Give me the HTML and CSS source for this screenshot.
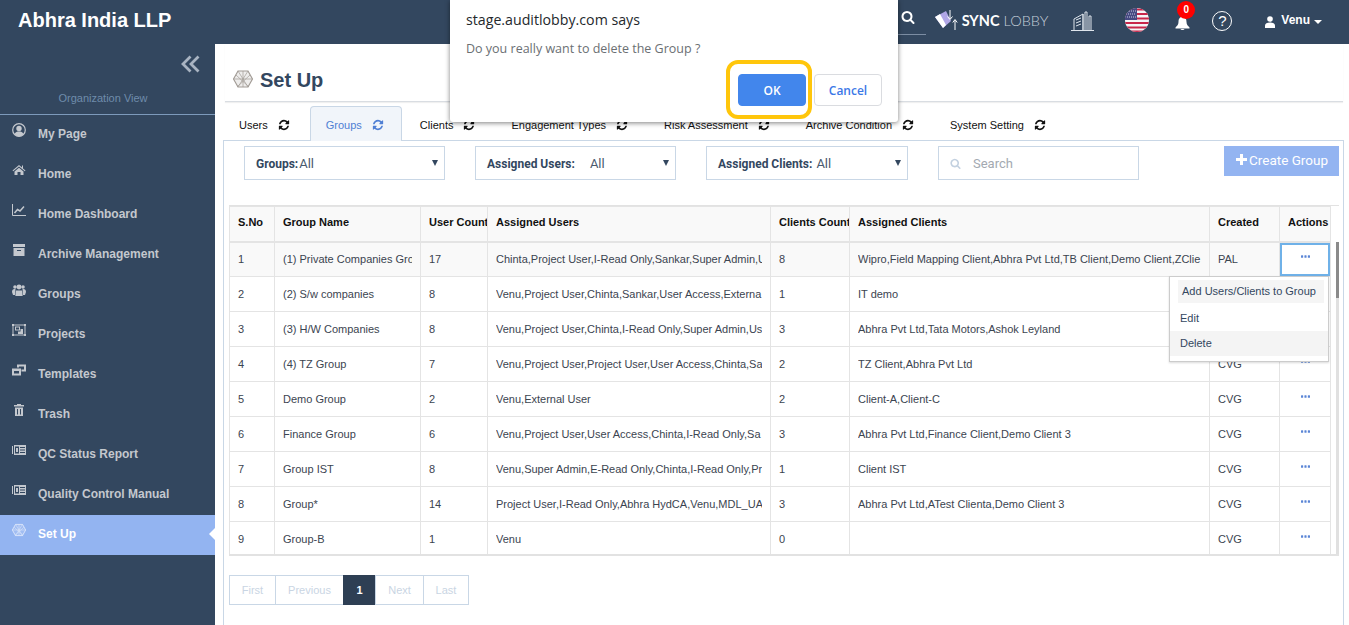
FILE: index.html
```html
<!DOCTYPE html>
<html>
  <head>
    <meta charset="utf-8">
    <title>Set Up</title>
    <link rel="stylesheet" href="styles.css">
  </head>
  <body>
    <svg class="defs" width="0" height="0">
      <symbol id="i-refresh" viewBox="0 0 1792 1792">
        <path d="M1639 1056q0 5-1 7-64 268-268 434.5t-478 166.5q-146 0-282.5-55t-243.5-157l-129 129q-19 19-45 19t-45-19-19-45v-448q0-26 19-45t45-19h448q26 0 45 19t19 45-19 45l-137 137q71 66 161 102t187 36q134 0 250-65t186-179q11-17 53-117 8-23 30-23h192q13 0 22.5 9.5t9.5 22.5zm25-800v448q0 26-19 45t-45 19h-448q-26 0-45-19t-19-45 19-45l138-138q-148-137-349-137-134 0-250 65t-186 179q-11 17-53 117-8 23-30 23h-199q-13 0-22.5-9.5t-9.5-22.5v-7q65-268 270-434.5t480-166.5q146 0 284 55.5t245 156.5l130-129q19-19 45-19t45 19 19 45z"/>
      </symbol>
      <symbol id="i-search" viewBox="0 0 1792 1792">
        <path d="M1216 832q0-185-131.5-316.5t-316.5-131.5-316.5 131.5-131.5 316.5 131.5 316.5 316.5 131.5 316.5-131.5 131.5-316.5zm512 832q0 52-38 90t-90 38q-54 0-90-38l-343-342q-179 124-399 124-143 0-273.5-55.5t-225-150-150-225-55.5-273.5 55.5-273.5 150-225 225-150 273.5-55.5 273.5 55.5 225 150 150 225 55.5 273.5q0 220-124 399l343 343q37 37 37 90z"/>
      </symbol>
      <symbol id="i-dots" viewBox="0 0 10 3">
        <rect x="0" y="0" width="2.4" height="3" rx=".6"/>
        <rect x="3.8" y="0" width="2.4" height="3" rx=".6"/>
        <rect x="7.6" y="0" width="2.4" height="3" rx=".6"/>
      </symbol>
      <symbol id="i-news" viewBox="0 0 14 10">
        <path fill-rule="evenodd" d="M0 1h1v8H0zM2 0h12v10H2zM3 1.500v7h4v-7zM8 2v1h5V2zM8 4.500v1h5v-1zM8 7v1h5V7z"/>
        <rect x="4" y="3" width="2" height="4"/>
      </symbol>
      <symbol id="i-hex" viewBox="0 0 20 18">
        <path d="M5 1h10l4.500 8-4.500 8H5L.5 9z" fill="currentColor" fill-opacity=".18" stroke="currentColor" stroke-width="1.200"/>
        <path d="M5 1l10 16M15 1L5 17M.5 9h19M10 1v16M3 5l13 12M17 5L4 17" fill="none" stroke="currentColor" stroke-width=".7"/>
      </symbol>
    </svg>

    <div class="topbar">
      <div class="brand">Abhra India LLP</div>
      <div class="topbar-right">
        <div class="top-search"><svg class="ic-14"><use href="#i-search"/></svg></div>
        <svg class="sync-logo" width="24" height="22" viewBox="0 0 24 22">
          <path d="M1 8l11-6 5 10-8 7z" fill="#b0a6e6"/>
          <path d="M1 8l5-3 6 11-3 3z" fill="#fff"/>
          <path d="M16 1v9M13.500 7.500l2.500 3 2.500-3M21 21v-10M18.800 13.500l2.200-3 2.200 3" stroke="#fff" stroke-width="1" fill="none"/>
        </svg>
        <div class="sync-text"><b>SYNC</b> LOBBY</div>
        <svg class="building" width="23" height="20" viewBox="0 0 23 20">
          <path d="M3 19V8l9-5v16M12 3l0 16M14 19V1h2v18M18 19V5h2v14M0 19.500h23M5 9l5-2M5 12l5-2M5 15l5-2" stroke="#dfe5ec" stroke-width="1" fill="none"/>
        </svg>
        <svg class="flag" width="24" height="24" viewBox="0 0 24 24">
          <defs><clipPath id="flag-clip"><circle cx="12" cy="12" r="12"/></clipPath></defs>
          <g clip-path="url(#flag-clip)">
            <rect width="24" height="24" fill="#f4f4f6"/>
            <path d="M0 1.500h24M0 6h24M0 10.500h24M0 15h24M0 19.500h24M0 23.500h24" stroke="#c8264a" stroke-width="2.200"/>
            <rect width="12" height="12" fill="#464a82"/>
            <path d="M2 3h9M1 6h10M2 9h9" stroke="#c9cbe0" stroke-width="1" stroke-dasharray="1 1"/>
          </g>
        </svg>
        <div class="bell">
          <svg width="15" height="13" viewBox="0 0 15 13">
            <path d="M7.500 0C4.500 0 3.500 2 3.500 5c0 2.500-1.500 4-3 5.500v1h14v-1c-1.500-1.500-3-3-3-5.500 0-3-1-5-4-5zM5.500 12h4a2 1 0 0 1-4 0z" fill="#fff"/>
          </svg>
          <span class="badge">0</span>
        </div>
        <div class="help">?</div>
        <svg class="user-ic" width="10" height="12" viewBox="0 0 10 12">
          <circle cx="5" cy="3" r="2.800" fill="#fff"/>
          <path d="M0 12V9.500C0 7.500 2 6.500 5 6.500s5 1 5 3V12z" fill="#fff"/>
        </svg>
        <div class="user-name">Venu</div>
        <span class="caret"></span>
      </div>
    </div>

    <div class="layout">
      <div class="sidebar">
        <div class="collapse">
          <svg width="19" height="18" viewBox="0 0 19 18">
            <path d="M9.500 1.500L2 9l7.500 7.500M17.500 1.500L10 9l7.500 7.500" fill="none" stroke="#a9b4c2" stroke-width="2.800"/>
          </svg>
        </div>
        <div class="org-view">Organization View</div>
        <div class="nav">
          <div class="nav-item">
            <svg class="nav-ic" viewBox="0 0 14 14"><circle cx="7" cy="7" r="6.300" fill="none" stroke="currentColor" stroke-width="1.200"/><circle cx="7" cy="5.500" r="2.700"/><path d="M2.500 11c1-2 2.500-2.500 4.500-2.500s3.500.5 4.500 2.500c-1 1.500-2.700 2.500-4.500 2.500S3.500 12.500 2.500 11z"/></svg>
            <span>My Page</span>
          </div>
          <div class="nav-item">
            <svg class="nav-ic" viewBox="0 0 14 14"><path d="M7 2L0.500 7.500l.7.800L7 3.500l5.800 4.800.7-.8-2.500-2.100V2.500H10v2z"/><path d="M2.500 8.500L7 4.800l4.500 3.700V12H8.500V9h-3v3h-3z"/></svg>
            <span>Home</span>
          </div>
          <div class="nav-item">
            <svg class="nav-ic" viewBox="0 0 14 14"><path d="M.5 1v11.500H14" fill="none" stroke="currentColor" stroke-width="1"/><path d="M2.500 10l3-3.500 2.500 1.500 4-4.500" fill="none" stroke="currentColor" stroke-width="1.500"/></svg>
            <span>Home Dashboard</span>
          </div>
          <div class="nav-item">
            <svg class="nav-ic" viewBox="0 0 14 14"><rect x="1" y="1" width="12" height="3"/><path fill-rule="evenodd" d="M1.500 5h11v8h-11zM5 7v1h4V7z"/></svg>
            <span>Archive Management</span>
          </div>
          <div class="nav-item">
            <svg class="nav-ic" viewBox="0 0 14 14"><circle cx="3" cy="4" r="1.800"/><circle cx="11" cy="4" r="1.800"/><circle cx="7" cy="4" r="2.400"/><path d="M0 9c0-2 1-3 2.500-3h1L3 12H1zM14 9c0-2-1-3-2.500-3h-1l.5 6h2zM4 7.500h6l.7 5.500H3.300z"/></svg>
            <span>Groups</span>
          </div>
          <div class="nav-item">
            <svg class="nav-ic" viewBox="0 0 14 14"><path fill-rule="evenodd" d="M0 1h2v.5h10V1h2v2h-.5v8h.5v2h-2v-.5H2v.5H0v-2h.5V3H0zM1.500 3v8H2v.5h10V11h.5V3H12v-.5H2V3z"/><path fill-rule="evenodd" d="M3 3.500h5v4H3zM4 4.500v2h3v-2zM6 8.500h2.500V6H11v5H6z"/></svg>
            <span>Projects</span>
          </div>
          <div class="nav-item">
            <svg class="nav-ic" viewBox="0 0 14 14"><path fill-rule="evenodd" d="M5 1.500h9v7H9.500v-2h2.500v-3H7v1H5z"/><path fill-rule="evenodd" d="M0 5.500h9v7H0zM2 8v2.500h5V8z"/></svg>
            <span>Templates</span>
          </div>
          <div class="nav-item">
            <svg class="nav-ic" viewBox="0 0 14 14"><path d="M5 1h4v1h3v1.500H2V2h3zM3 4.500h8V13H3zM5 6v5.500h1V6zM8 6v5.500h1V6z" fill-rule="evenodd"/></svg>
            <span>Trash</span>
          </div>
          <div class="nav-item">
            <svg class="nav-ic"><use href="#i-news"/></svg>
            <span>QC Status Report</span>
          </div>
          <div class="nav-item">
            <svg class="nav-ic"><use href="#i-news"/></svg>
            <span>Quality Control Manual</span>
          </div>
          <div class="nav-item active">
            <svg class="nav-ic"><use href="#i-hex"/></svg>
            <span>Set Up</span>
          </div>
        </div>
      </div>

      <div class="main">
        <div class="page-title">
          <svg class="title-ic" width="20" height="18"><use href="#i-hex"/></svg>
          <span>Set Up</span>
        </div>

        <div class="tabs">
          <div class="tab">Users<svg class="ic-refresh"><use href="#i-refresh"/></svg></div>
          <div class="tab active">Groups<svg class="ic-refresh"><use href="#i-refresh"/></svg></div>
          <div class="tab">Clients<svg class="ic-refresh"><use href="#i-refresh"/></svg></div>
          <div class="tab">Engagement Types<svg class="ic-refresh"><use href="#i-refresh"/></svg></div>
          <div class="tab">Risk Assessment<svg class="ic-refresh"><use href="#i-refresh"/></svg></div>
          <div class="tab">Archive Condition<svg class="ic-refresh"><use href="#i-refresh"/></svg></div>
          <div class="tab">System Setting<svg class="ic-refresh"><use href="#i-refresh"/></svg></div>
        </div>

        <div class="card">
          <div class="filters">
            <div class="select sel-groups"><b>Groups:</b><span class="sel-val tight">All</span><i class="sel-caret"></i></div>
            <div class="select sel-users"><b>Assigned Users:</b><span class="sel-val">All</span><i class="sel-caret"></i></div>
            <div class="select sel-clients"><b>Assigned Clients:</b><span class="sel-val small-gap">All</span><i class="sel-caret"></i></div>
            <div class="search-box"><svg class="ic-search"><use href="#i-search"/></svg>Search</div>
            <div class="create-btn"><span class="plus"></span>Create Group</div>
          </div>

          <div class="table-wrap">
            <table class="grid">
              <colgroup>
                <col class="c-no"><col class="c-name"><col class="c-ucount"><col class="c-users"><col class="c-ccount"><col class="c-clients"><col class="c-created"><col class="c-actions">
              </colgroup>
              <thead>
                <tr><th>S.No</th><th>Group Name</th><th>User Count</th><th>Assigned Users</th><th>Clients Count</th><th>Assigned Clients</th><th>Created</th><th>Actions</th></tr>
              </thead>
              <tbody>
                <tr class="row-hover">
                  <td>1</td><td><div class="clip">(1) Private Companies Gro</div></td><td>17</td>
                  <td><div class="clip">Chinta,Project User,I-Read Only,Sankar,Super Admin,U</div></td><td>8</td>
                  <td><div class="clip">Wipro,Field Mapping Client,Abhra Pvt Ltd,TB Client,Demo Client,ZClie</div></td><td>PAL</td>
                  <td class="act focused"><svg class="dots"><use href="#i-dots"/></svg></td>
                </tr>
                <tr>
                  <td>2</td><td><div class="clip">(2) S/w companies</div></td><td>8</td>
                  <td><div class="clip">Venu,Project User,Chinta,Sankar,User Access,Externa</div></td><td>1</td>
                  <td><div class="clip">IT demo</div></td><td>CVG</td>
                  <td class="act"><svg class="dots"><use href="#i-dots"/></svg></td>
                </tr>
                <tr>
                  <td>3</td><td><div class="clip">(3) H/W Companies</div></td><td>8</td>
                  <td><div class="clip">Venu,Project User,Chinta,I-Read Only,Super Admin,Us</div></td><td>3</td>
                  <td><div class="clip">Abhra Pvt Ltd,Tata Motors,Ashok Leyland</div></td><td>CVG</td>
                  <td class="act"><svg class="dots"><use href="#i-dots"/></svg></td>
                </tr>
                <tr>
                  <td>4</td><td><div class="clip">(4) TZ Group</div></td><td>7</td>
                  <td><div class="clip">Venu,Project User,Project User,User Access,Chinta,Sa</div></td><td>2</td>
                  <td><div class="clip">TZ Client,Abhra Pvt Ltd</div></td><td>CVG</td>
                  <td class="act"><svg class="dots"><use href="#i-dots"/></svg></td>
                </tr>
                <tr>
                  <td>5</td><td><div class="clip">Demo Group</div></td><td>2</td>
                  <td><div class="clip">Venu,External User</div></td><td>2</td>
                  <td><div class="clip">Client-A,Client-C</div></td><td>CVG</td>
                  <td class="act"><svg class="dots"><use href="#i-dots"/></svg></td>
                </tr>
                <tr>
                  <td>6</td><td><div class="clip">Finance Group</div></td><td>6</td>
                  <td><div class="clip">Venu,Project User,User Access,Chinta,I-Read Only,Sa</div></td><td>3</td>
                  <td><div class="clip">Abhra Pvt Ltd,Finance Client,Demo Client 3</div></td><td>CVG</td>
                  <td class="act"><svg class="dots"><use href="#i-dots"/></svg></td>
                </tr>
                <tr>
                  <td>7</td><td><div class="clip">Group IST</div></td><td>8</td>
                  <td><div class="clip">Venu,Super Admin,E-Read Only,Chinta,I-Read Only,Pr</div></td><td>1</td>
                  <td><div class="clip">Client IST</div></td><td>CVG</td>
                  <td class="act"><svg class="dots"><use href="#i-dots"/></svg></td>
                </tr>
                <tr>
                  <td>8</td><td><div class="clip">Group*</div></td><td>14</td>
                  <td><div class="clip">Project User,I-Read Only,Abhra HydCA,Venu,MDL_UA</div></td><td>3</td>
                  <td><div class="clip">Abhra Pvt Ltd,ATest Clienta,Demo Client 3</div></td><td>CVG</td>
                  <td class="act"><svg class="dots"><use href="#i-dots"/></svg></td>
                </tr>
                <tr>
                  <td>9</td><td><div class="clip">Group-B</div></td><td>1</td>
                  <td><div class="clip">Venu</div></td><td>0</td>
                  <td></td><td>CVG</td>
                  <td class="act"><svg class="dots"><use href="#i-dots"/></svg></td>
                </tr>
              </tbody>
            </table>
            <div class="scroll-col"><div class="scroll-track"><div class="scroll-thumb"></div></div></div>

            <div class="row-menu">
              <div class="menu-first"><span>Add Users/Clients to Group</span></div>
              <div class="menu-item">Edit</div>
              <div class="menu-item hover">Delete</div>
            </div>
          </div>

          <div class="pager">
            <div class="pg pg-first">First</div>
            <div class="pg pg-prev">Previous</div>
            <div class="pg pg-cur">1</div>
            <div class="pg pg-next">Next</div>
            <div class="pg pg-last">Last</div>
          </div>
        </div>
      </div>
    </div>

    <div class="dialog">
      <div class="dlg-title">stage.auditlobby.com says</div>
      <div class="dlg-msg">Do you really want to delete the Group ?</div>
      <div class="dlg-btns">
        <button class="btn-ok">OK</button>
        <button class="btn-cancel">Cancel</button>
      </div>
      <div class="ok-ring"></div>
    </div>
  </body>
</html>
```

FILE: styles.css
```css
html,
body {
  margin: 0;
  width: 1349px;
  height: 625px;
  overflow: hidden;
  background: #fff;
}
* {
  box-sizing: border-box;
}
body {
  font-family: 'Liberation Sans', Arial, sans-serif;
  font-size: 11px;
  color: #33475f;
  display: flex;
  flex-direction: column;
  position: relative;
}
.defs {
  position: absolute;
}

/* top bar */
.topbar {
  height: 44px;
  background: #33475f;
  display: flex;
  align-items: center;
  justify-content: space-between;
  color: #fff;
  flex: none;
}
.brand {
  font-size: 20px;
  font-weight: bold;
  margin-left: 18px;
  margin-top: -4px;
}
.topbar-right {
  display: flex;
  align-items: center;
  padding-right: 27px;
}
.top-search {
  width: 60px;
  height: 35px;
  margin-top: -9px;
  border-bottom: 1px solid #7c8da3;
  display: flex;
  align-items: center;
  justify-content: flex-end;
  padding-right: 11px;
  fill: #fff;
}
.ic-14 {
  width: 14px;
  height: 14px;
}
.sync-logo {
  margin-left: 8px;
  margin-top: -4px;
}
.sync-text {
  font-family: 'Lato', sans-serif;
  font-size: 14.5px;
  color: #c5ced9;
  margin-left: 4px;
  margin-top: -3px;
  font-weight: 300;
}
.sync-text b {
  color: #fff;
  font-weight: 700;
}
.building {
  margin-left: 23px;
  margin-top: -3px;
}
.flag {
  margin-left: 31px;
  margin-top: -4px;
}
.bell {
  position: relative;
  width: 15px;
  height: 13px;
  margin-left: 26px;
  margin-top: 3px;
  display: flex;
}
.badge {
  position: absolute;
  left: 2px;
  top: -16px;
  width: 18px;
  height: 18px;
  border-radius: 50%;
  background: #f00;
  color: #fff;
  font-size: 10px;
  font-weight: bold;
  text-align: center;
  line-height: 18px;
}
.help {
  width: 20px;
  height: 20px;
  border: 1.500px solid #fff;
  border-radius: 50%;
  margin-left: 22px;
  margin-top: -3px;
  font-size: 15px;
  line-height: 18px;
  text-align: center;
}
.user-ic {
  margin-left: 33px;
}
.user-name {
  font-size: 12px;
  font-weight: bold;
  margin-left: 6px;
  margin-top: -5px;
}
.caret {
  margin-left: 4px;
  border-top: 4px solid #fff;
  border-left: 4px solid transparent;
  border-right: 4px solid transparent;
}

/* sidebar */
.layout {
  flex: 1;
  display: flex;
  min-height: 0;
}
.sidebar {
  width: 215px;
  background: #33475f;
  flex: none;
}
.collapse {
  height: 30px;
  padding: 11px 15px 0 0;
  text-align: right;
}
.org-view {
  margin-top: 16px;
  height: 25px;
  text-align: center;
  font-size: 11px;
  color: #6f8cab;
  padding: 2px 9px 0 0;
  border-bottom: 1px solid #7d9abb;
}
.nav-item {
  height: 40px;
  display: flex;
  align-items: flex-start;
  padding: 9px 0 0 12px;
  color: #c4c8ce;
  font-size: 12px;
  font-weight: bold;
  position: relative;
}
.nav-item span {
  margin-left: 12px;
  margin-top: 3px;
  line-height: 14px;
}
.nav-ic {
  width: 14px;
  height: 14px;
  margin-top: -1px;
  fill: currentColor;
  flex: none;
}
.nav-item.active {
  background: #93b4f1;
  color: #fff;
}
.nav-item.active .nav-ic {
  color: #e3ebfb;
}
.nav-item.active::after {
  content: '';
  position: absolute;
  right: 0;
  top: 13px;
  border-top: 6px solid transparent;
  border-bottom: 6px solid transparent;
  border-right: 6px solid #fff;
}

/* main */
.main {
  flex: 1;
  display: flex;
  flex-direction: column;
  min-width: 0;
}
.page-title {
  height: 58px;
  margin: 0 6px 0 10px;
  padding: 15px 0 0 8px;
  border-bottom: 1px solid #d9dde2;
  box-shadow: 0 1px 1px #f0f0f0;
  display: flex;
  align-items: center;
  font-size: 20px;
  font-weight: bold;
  color: #33475f;
}
.title-ic {
  color: #a29c96;
  margin-right: 7px;
  margin-top: -2px;
}
.tabs {
  margin: 4px 0 -1px 8px;
  display: flex;
  height: 35px;
  position: relative;
  z-index: 1;
}
.tab {
  display: flex;
  align-items: center;
  height: 35px;
  padding: 1px 17px 0 15px;
  margin-right: 2px;
  color: #111;
  border: 1px solid transparent;
  border-bottom: none;
}
.tab.active {
  background: #f1f5fa;
  border-color: #c9d7e6;
  border-radius: 4px 4px 0 0;
  color: #4f7fd4;
}
.ic-refresh {
  width: 12px;
  height: 12px;
  margin-left: 10px;
  fill: currentColor;
}
.card {
  flex: 1;
  margin-left: 8px;
  width: 1121px;
  border: 1px solid #c9d7e6;
  border-bottom: none;
  padding-top: 5px;
}
.filters {
  display: flex;
  height: 34px;
  font-family: 'Roboto', sans-serif;
}
.select {
  height: 34px;
  border: 1px solid #c9d7e6;
  display: flex;
  align-items: center;
  padding-left: 11px;
  font-size: 12px;
  position: relative;
}
.select b {
  font-weight: bold;
  color: #33475f;
  padding-top: 2px;
}
.sel-groups {
  width: 201px;
  margin-left: 20px;
}
.sel-users {
  width: 201px;
  margin-left: 30px;
}
.sel-clients {
  width: 202px;
  margin-left: 30px;
}
.sel-val {
  margin-left: 15px;
  font-size: 13px;
  color: #4a5a6e;
}
.sel-val.tight {
  margin-left: 1px;
}
.sel-val.small-gap {
  margin-left: 4px;
}
.sel-caret {
  margin-left: auto;
  margin-right: 6px;
  border-top: 6px solid #33475f;
  border-left: 3.500px solid transparent;
  border-right: 3.500px solid transparent;
}
.search-box {
  width: 201px;
  height: 34px;
  margin-left: 30px;
  border: 1px solid #c9d7e6;
  display: flex;
  align-items: center;
  padding-left: 11px;
  font-size: 13px;
  color: #a3a9b1;
}
.ic-search {
  width: 11px;
  height: 11px;
  fill: #c3d1e0;
  margin-right: 12px;
}
.create-btn {
  margin-left: 85px;
  width: 115px;
  height: 30px;
  background: #93b4f1;
  color: #fff;
  font-size: 13.500px;
  display: flex;
  align-items: center;
  padding: 0 0 3px 12px;
}
.plus {
  width: 11px;
  height: 11px;
  margin-right: 2px;
  background:
    linear-gradient(#fff, #fff) center / 100% 3px no-repeat,
    linear-gradient(#fff, #fff) center / 3px 100% no-repeat;
}

/* table */
.table-wrap {
  margin: 25px 0 0 5px;
  width: 1110px;
  height: 351px;
  overflow: hidden;
  display: flex;
  position: relative;
  border-top: 1px solid #e2e2e2;
  border-bottom: 2px solid #e2e2e2;
}
.grid {
  width: 1101px;
  table-layout: fixed;
  border-collapse: collapse;
  flex: none;
  align-self: flex-start;
}
.c-no { width: 45px; }
.c-name { width: 146px; }
.c-ucount { width: 67px; }
.c-users { width: 283px; }
.c-ccount { width: 79px; }
.c-clients { width: 360px; }
.c-created { width: 70px; }
.c-actions { width: 51px; }
.grid th,
.grid td {
  height: 35px;
  padding: 0 8px;
  border: 1px solid #e4e4e4;
  white-space: nowrap;
  overflow: hidden;
  text-align: left;
  vertical-align: middle;
}
.grid th {
  background: #f9f9f9;
  color: #111;
  font-size: 11px;
  padding-right: 0;
  border-bottom-width: 2px;
  padding-bottom: 3px;
}
.grid td {
  color: #3b4450;
}
.clip {
  overflow: hidden;
}
.row-hover td {
  background: #f9f9f9;
}
.grid td.act {
  text-align: center;
  padding: 0 0 7px;
}
.grid td.focused {
  background: #fff;
  box-shadow: inset 0 0 0 2px #6fb1e8, 0 -1px 0 #6fb1e8;
}
.dots {
  width: 9px;
  height: 3px;
  fill: #5b86d6;
  display: inline-block;
  vertical-align: middle;
}
.scroll-col {
  flex: 1;
  padding: 36px 0 0 5px;
  border-right: 1px solid #e2e2e2;
  display: flex;
}
.scroll-track {
  width: 3px;
  background: #e0e0e0;
}
.scroll-thumb {
  height: 56px;
  background: #8a8a8a;
}
.row-menu {
  position: absolute;
  left: 940px;
  top: 70px;
  width: 160px;
  height: 86px;
  background: #fff;
  border: 1px solid #ccc;
  box-shadow: 0 1px 2px rgba(0, 0, 0, 0.15);
  color: #33475f;
  z-index: 2;
}
.menu-first {
  margin: 3px 4px 0 8px;
  height: 23px;
  line-height: 23px;
  padding-left: 4px;
  background: #f5f5f5;
}
.menu-item {
  height: 25px;
  line-height: 25px;
  padding-left: 10px;
}
.menu-first + .menu-item {
  margin-top: 3px;
}
.menu-item.hover {
  background: #f4f4f4;
}

/* pager */
.pager {
  display: flex;
  margin: 19px 0 0 5px;
  color: #c9d5e3;
}
.pg {
  height: 30px;
  line-height: 28px;
  border: 1px solid #c9d7e6;
  margin-left: -1px;
  text-align: center;
}
.pg-first {
  width: 47px;
  margin-left: 0;
}
.pg-prev { width: 69px; }
.pg-cur {
  width: 33px;
  background: #2e3f54;
  border-color: #2e3f54;
  color: #fff;
  font-weight: bold;
}
.pg-next { width: 49px; }
.pg-last { width: 46px; }

/* browser confirm box */
.dialog {
  position: absolute;
  left: 450px;
  top: 0;
  width: 448px;
  height: 122px;
  background: #fff;
  border-radius: 0 0 3px 3px;
  box-shadow: 0 1px 5px rgba(0, 0, 0, 0.5);
  padding: 10px 16px 0;
  font-family: 'Open Sans', sans-serif;
  z-index: 5;
}
.dlg-title {
  font-size: 14.200px;
  line-height: 20px;
  color: #24282c;
}
.dlg-msg {
  font-size: 12.500px;
  line-height: 18px;
  margin-top: 10px;
  color: #6b6f73;
}
.dlg-btns {
  display: flex;
  justify-content: flex-end;
  gap: 8px;
  margin-top: 16px;
}
.dlg-btns button {
  width: 68px;
  height: 32px;
  border-radius: 4px;
  font-family: 'Open Sans', sans-serif;
  font-size: 12px;
  font-weight: 600;
  padding: 0;
}
.btn-ok {
  background: #4286ec;
  border: 1px solid #4286ec;
  color: #fff;
}
.btn-cancel {
  background: #fff;
  border: 1px solid #dadce0;
  color: #3b78e7;
}
.ok-ring {
  position: absolute;
  left: 276px;
  top: 60px;
  width: 86px;
  height: 59px;
  border: 4px solid #ffc60b;
  border-radius: 12px;
}
```
